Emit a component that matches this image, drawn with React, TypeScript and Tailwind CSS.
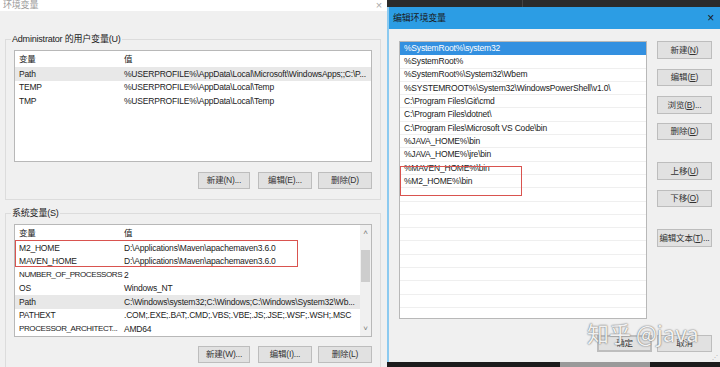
import React from 'react';

const userVars = [
  { name: 'Path', value: '%USERPROFILE%\\AppData\\Local\\Microsoft\\WindowsApps;;C:\\P...', selected: true },
  { name: 'TEMP', value: '%USERPROFILE%\\AppData\\Local\\Temp' },
  { name: 'TMP', value: '%USERPROFILE%\\AppData\\Local\\Temp' },
];

const systemVars = [
  { name: 'M2_HOME', value: 'D:\\Applications\\Maven\\apachemaven3.6.0' },
  { name: 'MAVEN_HOME', value: 'D:\\Applications\\Maven\\apachemaven3.6.0' },
  { name: 'NUMBER_OF_PROCESSORS', value: '2', tight: true },
  { name: 'OS', value: 'Windows_NT' },
  { name: 'Path', value: 'C:\\Windows\\system32;C:\\Windows;C:\\Windows\\System32\\Wb...', selected: true },
  { name: 'PATHEXT', value: '.COM;.EXE;.BAT;.CMD;.VBS;.VBE;.JS;.JSE;.WSF;.WSH;.MSC' },
  { name: 'PROCESSOR_ARCHITECT...', value: 'AMD64', tight: true },
];

const pathEntries = [
  '%SystemRoot%\\system32',
  '%SystemRoot%',
  '%SystemRoot%\\System32\\Wbem',
  '%SYSTEMROOT%\\System32\\WindowsPowerShell\\v1.0\\',
  'C:\\Program Files\\Git\\cmd',
  'C:\\Program Files\\dotnet\\',
  'C:\\Program Files\\Microsoft VS Code\\bin',
  '%JAVA_HOME%\\bin',
  '%JAVA_HOME%\\jre\\bin',
  '%MAVEN_HOME%\\bin',
  '%M2_HOME%\\bin',
  '', '', '', '', '', '', '', '', '', '', '',
];

const btn =
  'flex items-center justify-center whitespace-nowrap bg-[#e1e1e1] border border-[#bdbdbd] text-[#333]';

const VarRow = ({
  name,
  value,
  selected,
  tight,
}: {
  name: string;
  value: string;
  selected?: boolean;
  tight?: boolean;
}) => (
  <div className={`h-[13.5px] flex items-center whitespace-nowrap ${selected ? 'bg-[#e8e8e8]' : ''}`}>
    <span className={`w-[109px] pl-[4px] shrink-0 ${tight ? 'text-[8px] tracking-[-0.4px]' : ''}`}>{name}</span>
    <span>{value}</span>
  </div>
);

const ListHeader = () => (
  <div className="h-[16px] flex items-center">
    <span className="w-[109px] pl-[4px] shrink-0">变量</span>
    <span>值</span>
  </div>
);

export default function App() {
  return (
    <div className="relative flex w-[720px] h-[367px] overflow-hidden bg-[#f0f0f0] text-[8.5px] tracking-[-0.2px] leading-none text-[#222] font-['Liberation_Sans','Noto_Sans_CJK_SC',sans-serif]">
      {/* 环境变量 window */}
      <div className="w-[387px] shrink-0 flex flex-col">
        <div className="h-[15px] bg-white flex items-center justify-between pl-[3px] pr-[5px]">
          <span className="text-[#9a9a9a] text-[9px]">环境变量</span>
          <span className="text-[#aaa] text-[11px]">×</span>
        </div>
        <div className="flex-1 bg-[#f0f0f0]">
          <fieldset className="ml-[5px] mt-[22px] w-[376px] border border-[#dcdcdc] px-[8px] pt-[5px] pb-[10px]">
            <legend className="ml-[-3px] px-[1px] leading-[12px] text-[9px]">Administrator 的用户变量(U)</legend>
            <div className="h-[112px] bg-white border border-[#b8b8b8] overflow-hidden">
              <ListHeader />
              {userVars.map((v) => (
                <VarRow key={v.name} {...v} />
              ))}
            </div>
            <div className="mt-[10px] flex justify-end">
              <div className={`${btn} h-[17px] w-[52px]`}>新建(N)...</div>
              <div className={`${btn} h-[17px] w-[54px] ml-[8px]`}>编辑(E)...</div>
              <div className={`${btn} h-[17px] w-[54px] ml-[6px]`}>删除(D)</div>
            </div>
          </fieldset>

          <fieldset className="ml-[5px] mt-[7px] w-[376px] border border-[#dcdcdc] px-[8px] pt-[5px] pb-[10px]">
            <legend className="ml-[-3px] px-[1px] leading-[12px] text-[9px]">系统变量(S)</legend>
            <div className="relative h-[113px] bg-white border border-[#b8b8b8] overflow-hidden flex">
              <div className="flex-1">
                <ListHeader />
                {systemVars.map((v) => (
                  <VarRow key={v.name + v.value} {...v} />
                ))}
              </div>
              <div className="w-[11px] bg-[#f0f0f0] flex flex-col items-center">
                <span className="h-[15px] flex items-center text-[#777] text-[8px]">˄</span>
                <div className="mt-[10px] w-[9px] h-[32px] bg-[#cdcdcd]" />
                <div className="flex-1" />
                <span className="h-[15px] flex items-center text-[#777] text-[8px]">˅</span>
              </div>
              {/* highlight box */}
              <div className="absolute left-0 top-[15px] w-[283px] h-[27px] border border-[#d9534f]" />
            </div>
            <div className="mt-[9px] flex justify-end">
              <div className={`${btn} h-[17px] w-[52px]`}>新建(W)...</div>
              <div className={`${btn} h-[17px] w-[54px] ml-[8px]`}>编辑(I)...</div>
              <div className={`${btn} h-[17px] w-[54px] ml-[6px]`}>删除(L)</div>
            </div>
          </fieldset>
        </div>
      </div>

      {/* 编辑环境变量 dialog */}
      <div className="flex-1 flex flex-col">
        <div className="h-[7px] bg-[#2b2b2b] flex">
          <div className="w-[136px] border-r border-[#444]" />
        </div>
        <div className="flex-1 flex flex-col border-l-2 border-[#8ccaf0]">
          <div className="h-[22px] bg-[#2c9de4] flex items-center justify-between pl-[4px] pr-[6px]">
            <span className="text-[#1a1a1a] text-[9px]">编辑环境变量</span>
            <span className="text-[#1a1a1a] text-[12px]">×</span>
          </div>
          <div className="flex-1 bg-[#f0f0f0] pl-[10px] pt-[12px] relative">
            <div className="flex">
              <div className="relative w-[248px] h-[278px] bg-white border border-[#b8b8b8] overflow-hidden">
                {pathEntries.map((p, i) => (
                  <div
                    key={i}
                    className={`h-[13.3px] flex items-center pl-[4px] whitespace-nowrap border-b ${
                      i === 0 ? 'bg-[#3390e0] text-white border-[#3390e0]' : 'text-[#1a1a1a] border-[#efefef]'
                    }`}
                  >
                    {p}
                  </div>
                ))}
                <div className="absolute left-0 top-[124px] w-[122px] h-[30px] border border-[#d9534f]" />
              </div>
              <div className="ml-[10px] w-[55px] flex flex-col">
                <div className={`${btn} h-[17.5px]`}>新建(<u>N</u>)</div>
                <div className={`${btn} h-[17.5px] mt-[10px]`}>编辑(<u>E</u>)</div>
                <div className={`${btn} h-[17.5px] mt-[10px]`}>浏览(<u>B</u>)...</div>
                <div className={`${btn} h-[17.5px] mt-[9px]`}>删除(<u>D</u>)</div>
                <div className={`${btn} h-[17.5px] mt-[22px]`}>上移(<u>U</u>)</div>
                <div className={`${btn} h-[17.5px] mt-[10px]`}>下移(<u>O</u>)</div>
                <div className={`${btn} h-[17.5px] mt-[22px]`}>编辑文本(<u>T</u>)...</div>
              </div>
            </div>
            <div className="mt-[16px] ml-[198px] flex gap-[5px]">
              <div className={`${btn} h-[17px] w-[55px] border-2 border-[#1b7fd4]`}>确定</div>
              <div className={`${btn} h-[17px] w-[55px]`}>取消</div>
            </div>
            <div className="absolute right-[2px] bottom-[2px] text-[#aaa] text-[6px]">⋰</div>
          </div>
        </div>
        <div className="h-[5px] bg-[#1c1c1c] flex">
          <div className="ml-[173px] w-[90px] bg-[#9a9a9a]" />
        </div>
      </div>

      {/* watermark */}
      <div className="absolute left-[587px] top-[321px] text-[22px] leading-none tracking-normal text-white/90 font-['Noto_Sans_CJK_SC',sans-serif] [text-shadow:0_0_1px_#666,0_0_2px_#888]">
        知乎 @java
      </div>
    </div>
  );
}
